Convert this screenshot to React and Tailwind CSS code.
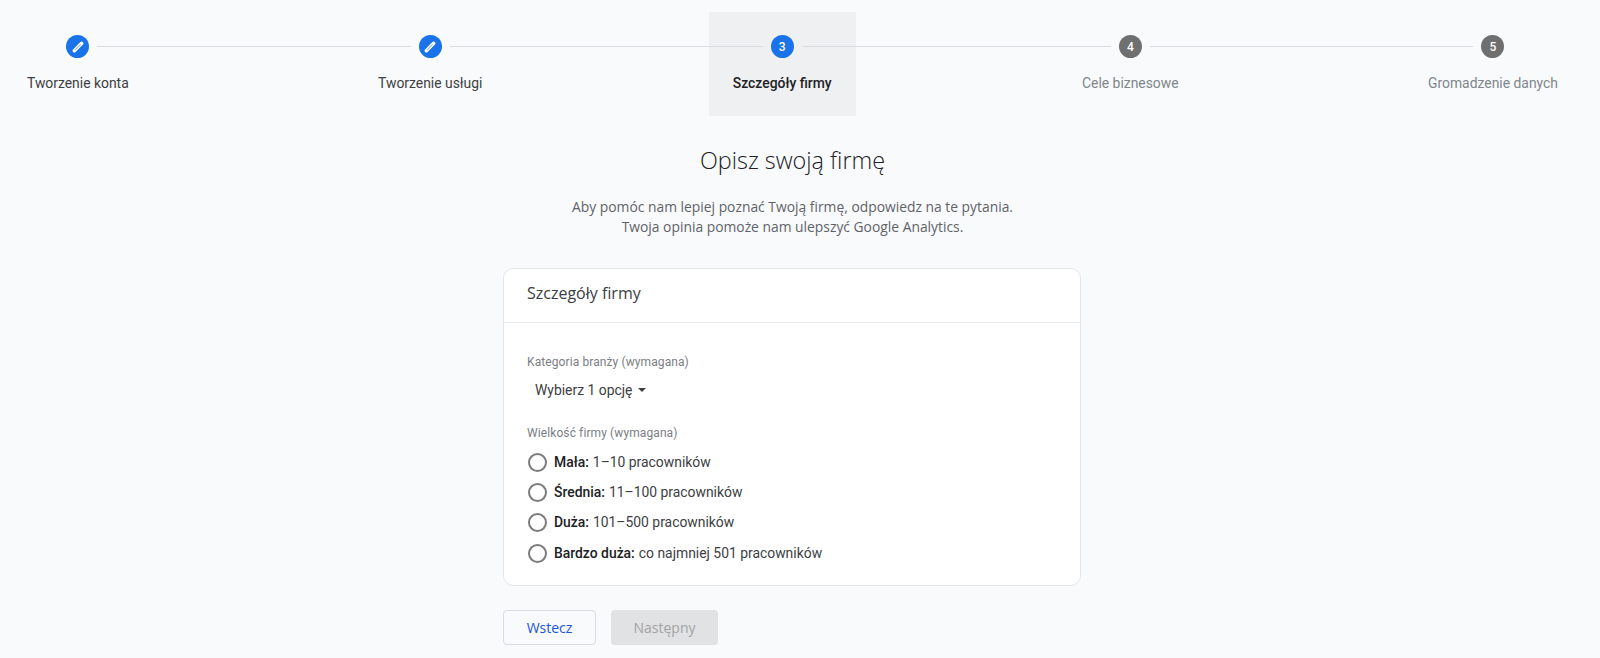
import React from "react";

const Pencil = () => (
  <svg width="16" height="16" viewBox="0 0 24 24" fill="none">
    <path d="M6.5 17.5L17.5 6.5" stroke="#fff" strokeWidth="5.4" strokeLinecap="round" />
    <path d="M7.5 16.5L16 8" stroke="#1a73e8" strokeOpacity="0.45" strokeWidth="1.6" />
  </svg>
);

const steps = [
  { label: "Tworzenie konta", state: "done" },
  { label: "Tworzenie usługi", state: "done" },
  { label: "Szczegóły firmy", state: "active", n: 3 },
  { label: "Cele biznesowe", state: "todo", n: 4 },
  { label: "Gromadzenie danych", state: "todo", n: 5 },
];

function Step({ s }) {
  const active = s.state === "active";
  const todo = s.state === "todo";
  return (
    <div className={`flex flex-col items-center h-[104px] pt-[23px] ${active ? "bg-[#eff0f2] px-[24px]" : "px-[23px]"}`}>
      <div
        className={`relative z-20 w-[23px] h-[23px] rounded-full flex items-center justify-center text-white text-[12px] font-medium ring-8 ${todo ? "bg-[#6f6f6f]" : "bg-[#1a73e8]"} ${active ? "ring-[#eff0f2]" : "ring-[#f9fafc]"}`}
      >
        {s.n ? s.n : <Pencil />}
      </div>
      <div className={`mt-[15px] text-[13.9px] leading-5 whitespace-nowrap ${todo ? "text-[#80868b]" : active ? "text-[#202124] font-[460]" : "text-[#3c4043]"}`}>
        {s.label}
      </div>
    </div>
  );
}

const sizes = [
  ["Mała", "1–10 pracowników"],
  ["Średnia", "11–100 pracowników"],
  ["Duża", "101–500 pracowników"],
  ["Bardzo duża", "co najmniej 501 pracowników"],
];

export default function App() {
  return (
    <div className="min-h-screen bg-[#f9fafc] font-['Roboto',sans-serif] text-[#3c4043]">
      <div className="w-[1585px] flex flex-col items-center">
        <div className="relative w-full flex justify-between px-[4px] pt-3">
          <div className="absolute z-10 left-[78px] right-[92px] top-[46px] h-px bg-[#dadce0]" />
          {steps.map((s) => (
            <Step key={s.label} s={s} />
          ))}
        </div>

        <h1 className="mt-[28px] text-[23.4px] leading-8 text-[#202124] font-['Open_Sans',sans-serif] font-light">
          Opisz swoją firmę
        </h1>
        <p className="mt-[21px] text-center text-[13.85px] leading-5 text-[#5f6368] font-['Open_Sans',sans-serif]">
          Aby pomóc nam lepiej poznać Twoją firmę, odpowiedz na te pytania.
          <br />
          Twoja opinia pomoże nam ulepszyć Google Analytics.
        </p>

        <div className="mt-[31px] mr-px w-[578px] h-[318px] bg-white border border-[#e3e5e8] rounded-[10px]">
          <div className="h-[54px] px-[23px] pb-[5px] flex items-center border-b border-[#e8eaed] text-[16px] text-[#3c4043] font-['Open_Sans',sans-serif]">
            Szczegóły firmy
          </div>
          <div className="px-[23px] pt-[31px]">
            <div className="text-[12px] leading-4 tracking-[0.1px] text-[#7a7e83]">Kategoria branży (wymagana)</div>
            <div className="mt-[11px] ml-2 flex items-center gap-[6px] text-[13.9px] leading-[18px] text-[#3c4043]">
              Wybierz 1 opcję
              <span className="w-0 h-0 border-x-[4px] border-x-transparent border-t-[4px] border-t-[#3c4043]" />
            </div>
            <div className="mt-[26px] text-[12px] leading-4 tracking-[0.1px] text-[#7a7e83]">Wielkość firmy (wymagana)</div>
            <div className="mt-[11px] flex flex-col gap-[10.4px]">
              {sizes.map(([a, b]) => (
                <div key={a} className="flex items-center h-5 text-[13.9px] text-[#3c4043]">
                  <span className="ml-px w-[19px] h-[19px] rounded-full border-2 border-[#7c7c7c] bg-white mr-[7px]" />
                  <span className="font-[460] text-[#202124]">{a}:</span>
                  <span className="ml-1">{b}</span>
                </div>
              ))}
            </div>
          </div>
        </div>

        <div className="mt-[24px] mr-px w-[578px] flex gap-[15px]">
          <button className="w-[93px] h-[35px] rounded border border-[#dadce0] bg-[#f9fafc] text-[14px] font-medium text-[#1a56d8] font-['Open_Sans',sans-serif]">
            Wstecz
          </button>
          <button className="w-[107px] h-[35px] rounded bg-[#e1e2e3] text-[14px] font-medium text-[#a2a3a5] font-['Open_Sans',sans-serif]">
            Następny
          </button>
        </div>
      </div>
    </div>
  );
}
